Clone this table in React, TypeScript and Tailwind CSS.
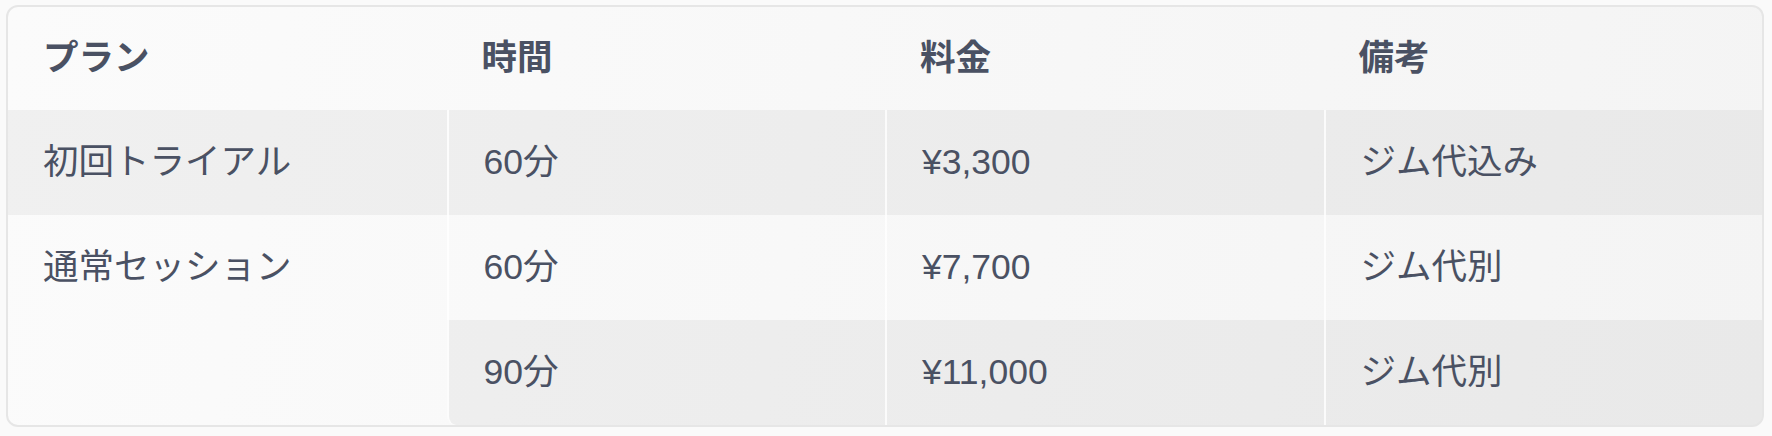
import React from 'react';

type Row = { plan?: string; span?: number; time: string; price: string; note: string; tone: 'gray' | 'light'; last?: boolean };

const rows: Row[] = [
  { plan: '初回トライアル', time: '60分', price: '¥3,300', note: 'ジム代込み', tone: 'gray' },
  { plan: '通常セッション', span: 2, time: '60分', price: '¥7,700', note: 'ジム代別', tone: 'light' },
  { time: '90分', price: '¥11,000', note: 'ジム代別', tone: 'gray', last: true },
];

const cellBase = 'h-[105px] pl-[35px] pr-4 align-middle text-left font-normal';

export default function App() {
  return (
    <div
      className="min-h-[436px] w-full bg-[#fafafa] pl-[6px] pr-[8px] pt-[5px] text-[#4a5163]"
      style={{ fontFamily: '"Liberation Sans", "Noto Sans CJK JP", sans-serif' }}
    >
      <div className="overflow-hidden rounded-[12px] border-2 border-[#e6e6e6] bg-[linear-gradient(100deg,#fbfbfb_0%,#f8f8f8_45%,#f4f4f4_100%)]">
        <table className="w-full table-fixed border-separate border-spacing-0 text-[35.5px] leading-[1.5]">
          <thead>
            <tr>
              {['プラン', '時間', '料金', '備考'].map((h) => (
                <th key={h} className="h-[103px] pl-[35px] text-left align-middle font-bold">
                  {h}
                </th>
              ))}
            </tr>
          </thead>
          <tbody>
            {rows.map((r, i) => {
              const bg = r.tone === 'gray' ? 'bg-black/[0.042]' : '';
              return (
                <tr key={i}>
                  {r.plan && (
                    <td rowSpan={r.span} className={`${cellBase} ${bg} ${r.span ? 'align-top' : ''}`}>
                      {r.span ? <div className="flex h-[105px] items-center">{r.plan}</div> : r.plan}
                    </td>
                  )}
                  <td className={`${cellBase} ${bg} border-l-2 border-white/80 ${r.last ? 'rounded-bl-[9px]' : ''}`}>{r.time}</td>
                  <td className={`${cellBase} ${bg} border-l-2 border-white/80`}>{r.price}</td>
                  <td className={`${cellBase} ${bg} border-l-2 border-white/80`}>{r.note}</td>
                </tr>
              );
            })}
          </tbody>
        </table>
      </div>
    </div>
  );
}
